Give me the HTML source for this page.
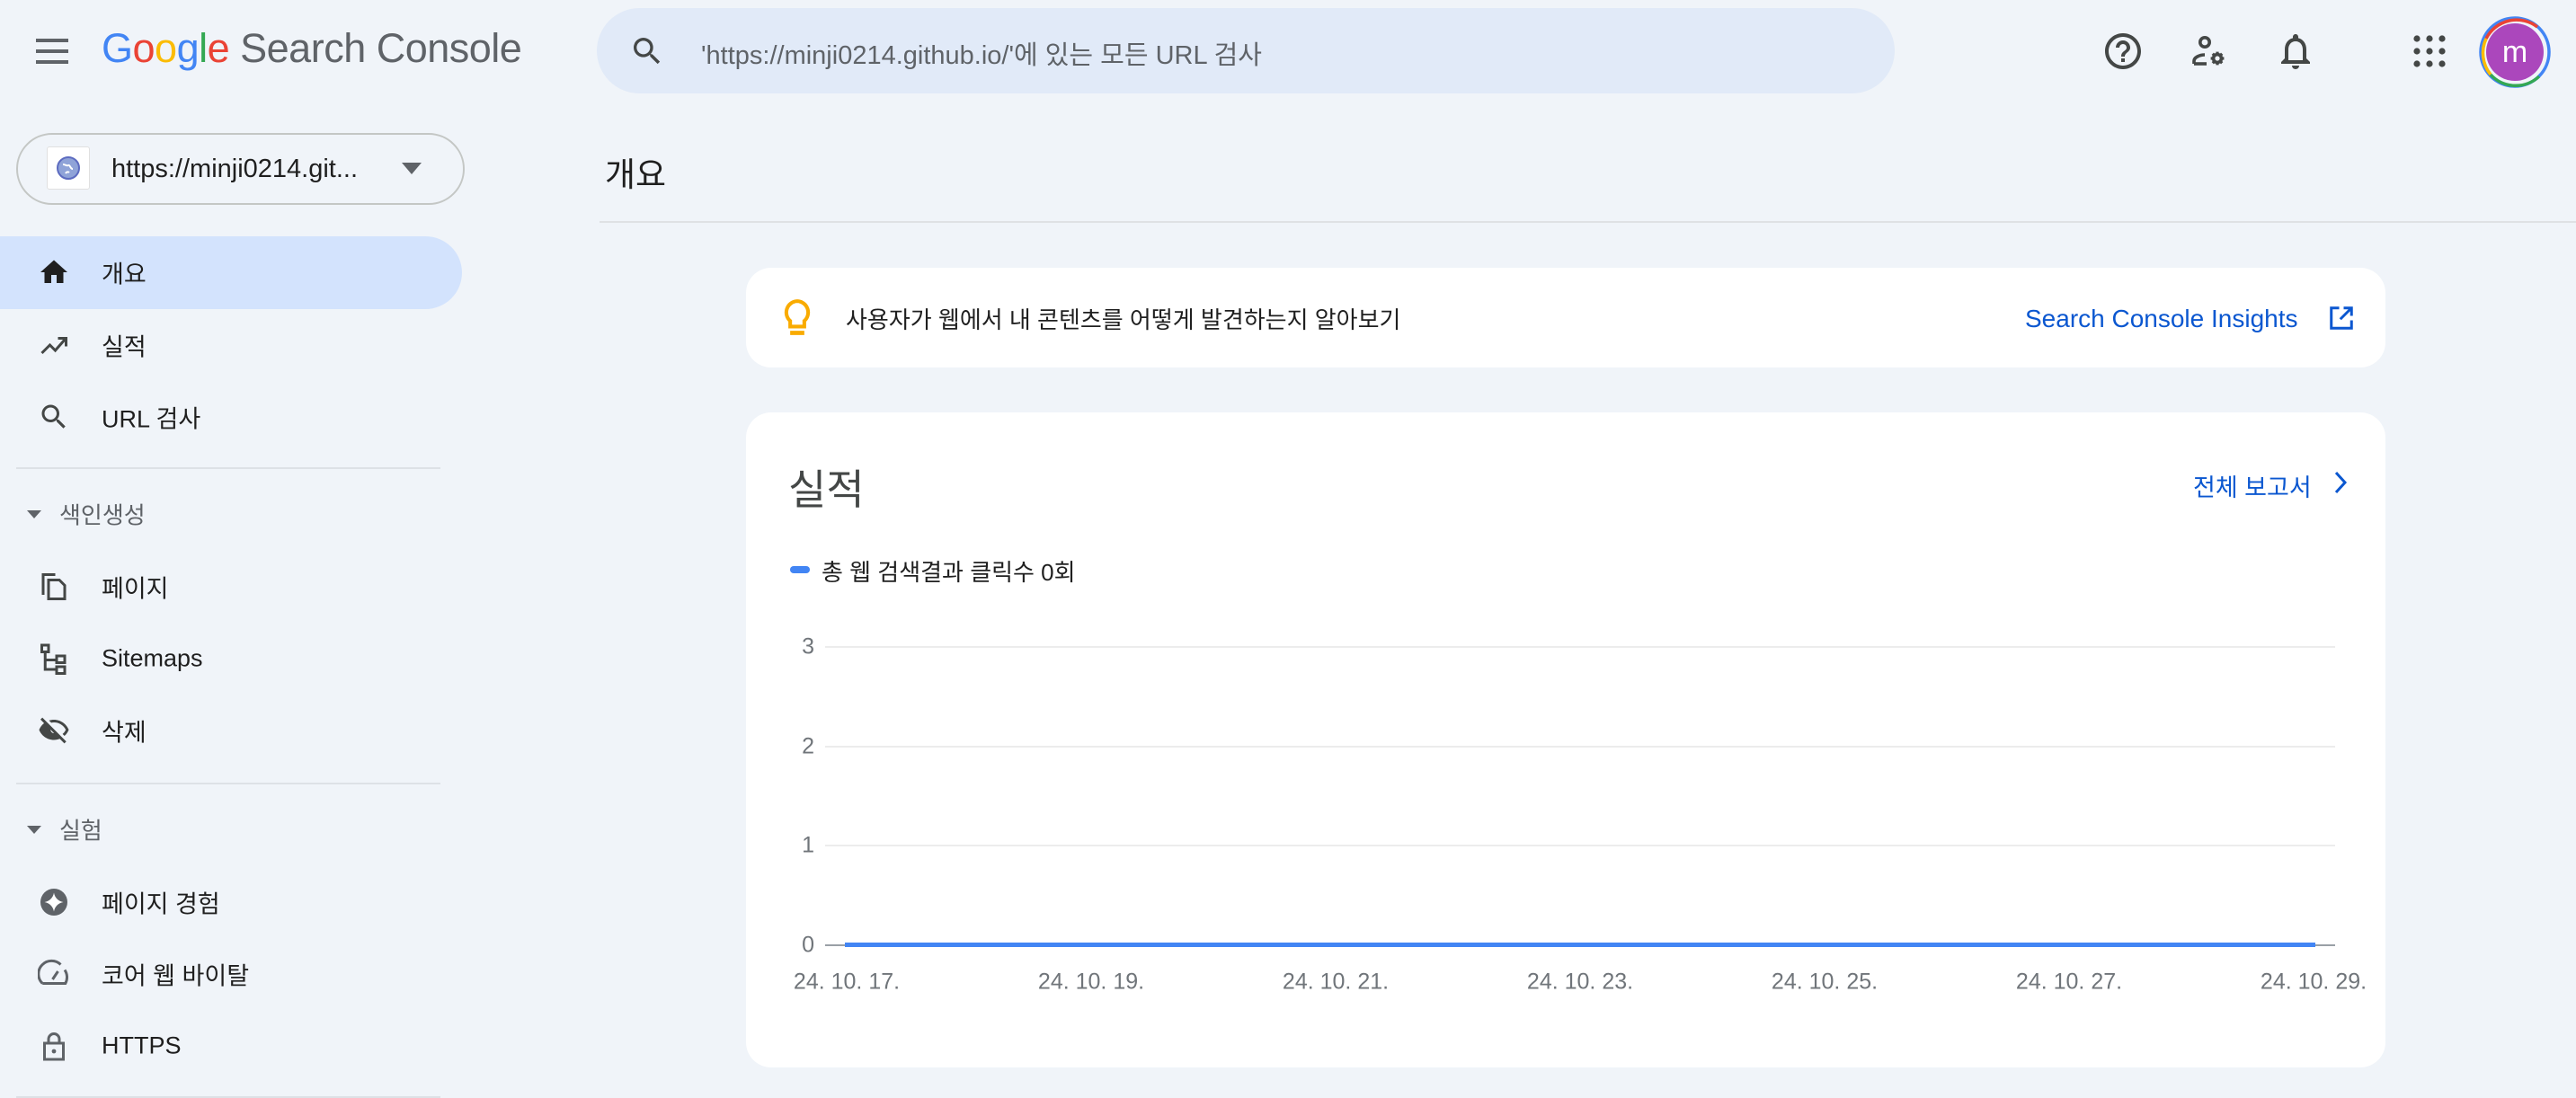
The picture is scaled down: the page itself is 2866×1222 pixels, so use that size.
<!DOCTYPE html>
<html><head><meta charset="utf-8"><style>
*{margin:0;padding:0;box-sizing:border-box}
body{width:2866px;height:1222px;background:#f0f4f9;font-family:"Liberation Sans","Noto Sans CJK KR",sans-serif;position:relative;overflow:hidden;color:#1f1f1f}
.a{position:absolute}
.nav{position:absolute;left:113px;font-size:27px;color:#1f1f1f;transform:translateY(-50%)}
.ic{position:absolute;left:42px;width:36px;height:36px;transform:translateY(-50%)}
.sec{position:absolute;left:66px;font-size:26px;color:#5f6368;transform:translateY(-50%)}
.div{position:absolute;left:18px;width:472px;height:2px;background:#dde1e6}
.yl{position:absolute;left:880px;width:26px;text-align:right;font-size:25px;color:#70757a;transform:translateY(-50%)}
.gl{position:absolute;left:918px;width:1680px;height:2px;background:#ececec}
.xl{position:absolute;font-size:25px;color:#70757a;transform:translate(-50%,-50%);white-space:nowrap}
</style></head><body>
<svg class="a" style="left:38px;top:39px" width="40" height="36" viewBox="0 0 40 36"><rect x="2" y="4" width="36" height="4" fill="#5f6368"/><rect x="2" y="16" width="36" height="4" fill="#5f6368"/><rect x="2" y="28" width="36" height="4" fill="#5f6368"/></svg>
<div class="a" style="left:113px;top:28px;font-size:45px;letter-spacing:-0.5px;white-space:nowrap"><span style="color:#4285f4">G</span><span style="color:#ea4335">o</span><span style="color:#fbbc05">o</span><span style="color:#4285f4">g</span><span style="color:#34a853">l</span><span style="color:#ea4335">e</span><span style="color:#5f6368"> Search Console</span></div>
<div class="a" style="left:664px;top:9px;width:1444px;height:95px;border-radius:48px;background:#e1eaf8"></div>
<svg class="a" style="left:700px;top:37px" width="40" height="40" viewBox="0 0 24 24"><path fill="#444746" d="M15.5 14h-.79l-.28-.27A6.470 6.470 0 0 0 16 9.5 6.5 6.5 0 1 0 9.5 16c1.610 0 3.090-.59 4.230-1.570l.27.28v.79l5 4.990L20.490 19l-4.990-5zm-6 0C7.010 14 5 11.990 5 9.5S7.010 5 9.5 5 14 7.010 14 9.5 11.990 14 9.5 14z"/></svg>
<div class="a" style="left:780px;top:38px;font-size:29px;color:#5f6368;white-space:nowrap">'https://minji0214.github.io/'에 있는 모든 URL 검사</div>
<svg class="a" style="left:2338px;top:33px" width="48" height="48" viewBox="0 0 24 24"><path fill="#444746" d="M11 18h2v-2h-2v2zm1-16C6.48 2 2 6.48 2 12s4.48 10 10 10 10-4.48 10-10S17.52 2 12 2zm0 18c-4.41 0-8-3.59-8-8s3.59-8 8-8 8 3.59 8 8-3.59 8-8 8zm0-14c-2.21 0-4 1.79-4 4h2c0-1.1.9-2 2-2s2 .9 2 2c0 2-3 1.75-3 5h2c0-2.25 3-2.5 3-5 0-2.21-1.79-4-4-4z"/></svg>
<svg class="a" style="left:2433px;top:33px" width="48" height="48" viewBox="0 0 24 24"><g fill="none" stroke="#444746" stroke-width="1.8"><circle cx="10" cy="7" r="2.6"/><path d="M4 19v-1.5c0-2 3-3.5 6-3.5"/><path d="M4 19h7"/><circle cx="17" cy="16" r="2.2"/></g><g stroke="#444746" stroke-width="1.6"><path d="M17 12.3v1.5M17 18.2v1.5M13.3 16h1.5M19.2 16h1.5M14.4 13.4l1 1M18.6 17.6l1 1M14.4 18.6l1-1M18.6 14.4l1-1"/></g></svg>
<svg class="a" style="left:2530px;top:33px" width="48" height="48" viewBox="0 0 24 24"><path fill="#444746" d="M12 22c1.1 0 2-.9 2-2h-4c0 1.1.9 2 2 2zm6-6v-5c0-3.07-1.63-5.64-4.5-6.32V4c0-.83-.67-1.5-1.5-1.5s-1.5.67-1.5 1.5v.68C7.64 5.36 6 7.92 6 11v5l-2 2v1h16v-1l-2-2zm-2 1H8v-6c0-2.48 1.51-4.5 4-4.5s4 2.02 4 4.5v6z"/></svg>
<svg class="a" style="left:2684px;top:38px" width="38" height="38" viewBox="0 0 38 38"><g fill="#444746"><circle cx="5" cy="5" r="3.6"/><circle cx="19" cy="5" r="3.6"/><circle cx="33" cy="5" r="3.6"/><circle cx="5" cy="19" r="3.6"/><circle cx="19" cy="19" r="3.6"/><circle cx="33" cy="19" r="3.6"/><circle cx="5" cy="33" r="3.6"/><circle cx="19" cy="33" r="3.6"/><circle cx="33" cy="33" r="3.6"/></g></svg>
<svg class="a" style="left:2757px;top:17px" width="82" height="82" viewBox="0 0 82 82"><circle cx="41" cy="41" r="38" fill="none" stroke="#4285f4" stroke-width="3.5"/><path d="M9 26A38 38 0 0 1 66 13" fill="none" stroke="#ea4335" stroke-width="3.5"/><path d="M9 26A38 38 0 0 0 14 66" fill="none" stroke="#fbbc05" stroke-width="3.5"/><path d="M14 66A38 38 0 0 0 68 68" fill="none" stroke="#34a853" stroke-width="3.5"/><circle cx="41" cy="41" r="32" fill="#ab47bc"/><text x="41" y="52" text-anchor="middle" font-family="Liberation Sans" font-size="34" fill="#fff">m</text></svg>
<div class="a" style="left:18px;top:148px;width:499px;height:80px;border:2px solid #c4c7c5;border-radius:40px"></div>
<div class="a" style="left:52px;top:163px;width:48px;height:48px;background:#fff;border:1px solid #e0e0e0;border-radius:3px"></div>
<svg class="a" style="left:62px;top:173px" width="28" height="28" viewBox="0 0 28 28"><circle cx="14" cy="14" r="12" fill="#8fa3d8" stroke="#5c6bc0" stroke-width="2"/><path d="M8 10c3 0 4 2 6 1s2 4 5 4M11 20c1-2 3-2 4-1" stroke="#fff" stroke-width="2" fill="none"/></svg>
<div class="a" style="left:124px;top:172px;font-size:29px;color:#1f1f1f">https://minji0214.git...</div>
<svg class="a" style="left:446px;top:180px" width="24" height="16"><path d="M1 1h22L12 14z" fill="#5f6368"/></svg>
<div class="a" style="left:0;top:263px;width:514px;height:81px;background:#d3e3fd;border-radius:0 41px 41px 0"></div>
<svg class="ic" style="top:303px" viewBox="0 0 24 24"><path fill="#1f1f1f" d="M10 20v-6h4v6h5v-8h3L12 3 2 12h3v8z"/></svg>
<div class="nav" style="top:303px">개요</div>
<svg class="ic" style="top:384px" viewBox="0 0 24 24"><path fill="none" stroke="#444746" stroke-width="2" d="M3 18l6-6 4 4 7-8M15 7h6v6"/></svg>
<div class="nav" style="top:384px">실적</div>
<svg class="ic" style="top:464px" viewBox="0 0 24 24"><path fill="#444746" d="M15.5 14h-.79l-.28-.27A6.47 6.47 0 0 0 16 9.5 6.5 6.5 0 1 0 9.5 16c1.61 0 3.09-.59 4.23-1.57l.27.28v.79l5 4.99L20.49 19l-4.99-5zm-6 0C7.01 14 5 11.99 5 9.5S7.01 5 9.5 5 14 7.01 14 9.5 11.99 14 9.5 14z"/></svg>
<div class="nav" style="top:464px">URL 검사</div>
<div class="div" style="top:520px"></div>
<svg class="a" style="left:29px;top:567px" width="18" height="12"><path d="M1 1h16L9 10z" fill="#5f6368"/></svg>
<div class="sec" style="top:572px">색인생성</div>
<svg class="ic" style="top:653px" viewBox="0 0 24 24"><path fill="none" stroke="#444746" stroke-width="2" d="M4 18V3h9M8 21V7h8l4 4v10z"/></svg>
<div class="nav" style="top:653px">페이지</div>
<svg class="ic" style="top:733px" viewBox="0 0 24 24"><path fill="none" stroke="#444746" stroke-width="2" d="M3 2h5v5H3zM5.5 7v13h8M5.5 13h8M14 10h6v5h-6zM14 18h6v5h-6z"/></svg>
<div class="nav" style="top:733px">Sitemaps</div>
<svg class="ic" style="top:813px" viewBox="0 0 24 24"><path fill="#444746" d="M12 6a9.77 9.77 0 0 1 8.82 5.5 9.6 9.6 0 0 1-2.4 3.12l1.41 1.41A11.8 11.8 0 0 0 23 11.5C21.27 7.11 17 4 12 4c-1.27 0-2.49.2-3.64.57l1.65 1.65C10.66 6.09 11.32 6 12 6zM2.01 3.87l2.68 2.68A11.74 11.74 0 0 0 1 11.5C2.73 15.89 7 19 12 19c1.52 0 2.98-.29 4.32-.82l3.42 3.42 1.41-1.41L3.42 2.45 2.01 3.87zM9.5 11.37l2.61 2.61c-.04.01-.08.02-.12.02a2.5 2.5 0 0 1-2.5-2.5c0-.05.01-.08.01-.13z"/></svg>
<div class="nav" style="top:813px">삭제</div>
<div class="div" style="top:871px"></div>
<svg class="a" style="left:29px;top:918px" width="18" height="12"><path d="M1 1h16L9 10z" fill="#5f6368"/></svg>
<div class="sec" style="top:923px">실험</div>
<svg class="ic" style="top:1004px" viewBox="0 0 24 24"><circle cx="12" cy="12" r="10" fill="#5f6368"/><path fill="#fff" d="M12 5c.6 3.7 3.3 6.4 7 7-3.7.6-6.4 3.3-7 7-.6-3.7-3.3-6.4-7-7 3.7-.6 6.4-3.3 7-7z"/></svg>
<div class="nav" style="top:1004px">페이지 경험</div>
<svg class="ic" style="top:1084px" viewBox="0 0 24 24"><path fill="none" stroke="#5f6368" stroke-width="2" d="M3.5 19A9.5 9.5 0 0 1 17 5M20 9a9.5 9.5 0 0 1 .5 10H3.5M11 16l4-6"/></svg>
<div class="nav" style="top:1084px">코어 웹 바이탈</div>
<svg class="ic" style="top:1164px" viewBox="0 0 24 24"><path fill="none" stroke="#5f6368" stroke-width="2" d="M5 10h14v12H5zM8 10V7a4 4 0 0 1 8 0v3"/><circle cx="12" cy="16" r="1.6" fill="#5f6368"/></svg>
<div class="nav" style="top:1164px">HTTPS</div>
<div class="div" style="top:1220px"></div>
<div class="a" style="left:673px;top:164px;font-size:37px;color:#1f1f1f">개요</div>
<div class="a" style="left:667px;top:246px;width:2199px;height:2px;background:#dfe1e4"></div>
<div class="a" style="left:830px;top:298px;width:1824px;height:111px;background:#fff;border-radius:28px"></div>
<svg class="a" style="left:868px;top:332px" width="38" height="44" viewBox="0 0 24 28"><path fill="none" stroke="#f9ab00" stroke-width="2.6" d="M12 2a8 8 0 0 0-5 14v4h10v-4a8 8 0 0 0-5-14z"/><rect x="7" y="23" width="10" height="3" fill="#f9ab00"/></svg>
<div class="a" style="left:941px;top:336px;font-size:26px;color:#1f1f1f;white-space:nowrap">사용자가 웹에서 내 콘텐츠를 어떻게 발견하는지 알아보기</div>
<div class="a" style="left:2253px;top:339px;font-size:28px;color:#0b57d0;white-space:nowrap">Search Console Insights</div>
<svg class="a" style="left:2590px;top:339px" width="30" height="30" viewBox="0 0 24 24"><path fill="none" stroke="#0b57d0" stroke-width="2.4" d="M10 3H3v18h18v-7M14 3h7v7M21 3l-10 10"/></svg>
<div class="a" style="left:830px;top:459px;width:1824px;height:729px;background:#fff;border-radius:28px"></div>
<div class="a" style="left:877px;top:509px;font-size:46px;color:#444746">실적</div>
<div class="a" style="left:2440px;top:521px;font-size:27px;color:#0b57d0;white-space:nowrap">전체 보고서</div>
<svg class="a" style="left:2594px;top:523px" width="20" height="28" viewBox="0 0 20 28"><path fill="none" stroke="#0b57d0" stroke-width="3" d="M5 3l10 11-10 11"/></svg>
<div class="a" style="left:879px;top:630px;width:22px;height:8px;border-radius:4px;background:#4285f4"></div>
<div class="a" style="left:914px;top:617px;font-size:26px;color:#1f1f1f;white-space:nowrap">총 웹 검색결과 클릭수 0회</div>
<div class="gl" style="top:719px"></div><div class="gl" style="top:830px"></div><div class="gl" style="top:940px"></div>
<div class="a" style="left:918px;top:1051px;width:1680px;height:2px;background:#9aa0a6"></div>
<div class="a" style="left:940px;top:1049px;width:1636px;height:5px;background:#4285f4"></div>
<div class="yl" style="top:720px">3</div><div class="yl" style="top:831px">2</div><div class="yl" style="top:941px">1</div><div class="yl" style="top:1052px">0</div>
<div class="xl" style="left:942px;top:1093px">24. 10. 17.</div>
<div class="xl" style="left:1214px;top:1093px">24. 10. 19.</div>
<div class="xl" style="left:1486px;top:1093px">24. 10. 21.</div>
<div class="xl" style="left:1758px;top:1093px">24. 10. 23.</div>
<div class="xl" style="left:2030px;top:1093px">24. 10. 25.</div>
<div class="xl" style="left:2302px;top:1093px">24. 10. 27.</div>
<div class="xl" style="left:2574px;top:1093px">24. 10. 29.</div>
</body></html>
